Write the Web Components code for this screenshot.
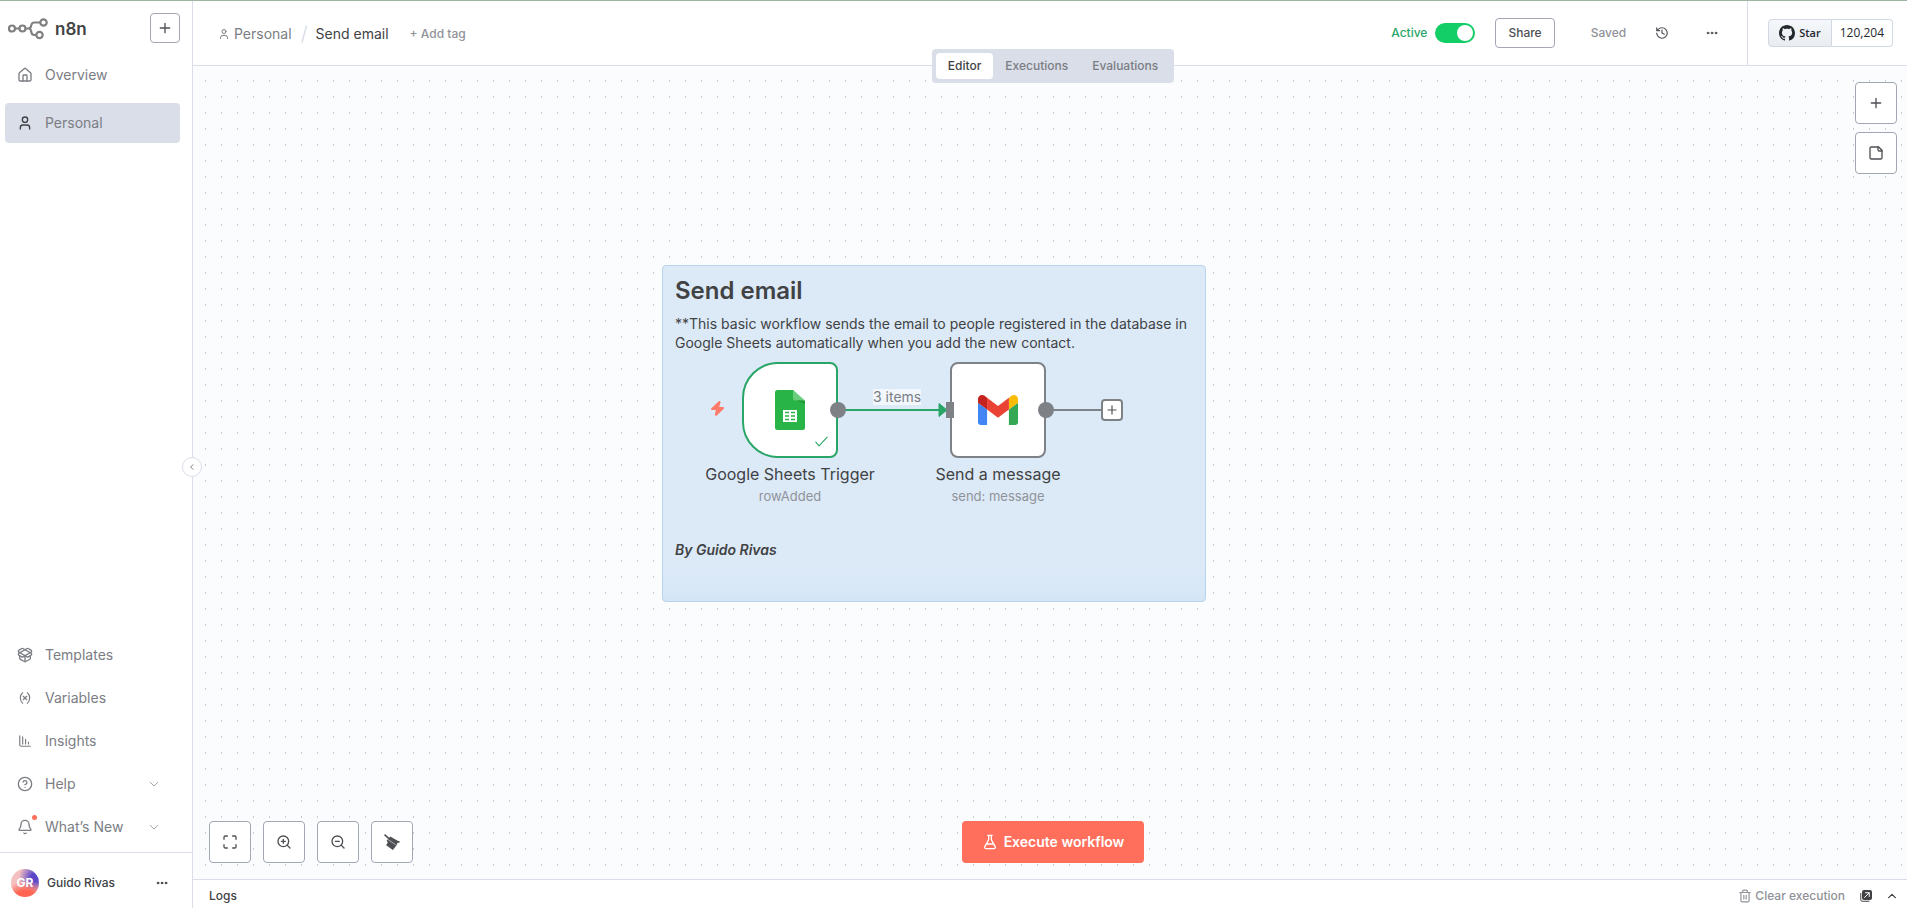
<!DOCTYPE html>
<html lang="en">
<head>
<meta charset="utf-8">
<meta name="viewport" content="width=device-width, initial-scale=1">
<title>Send email - n8n</title>
<style>
  :root {
    --line: #d9dee8;
    --control-line: #a3a6b5;
    --text-dark: #414244;
    --text: #7b7d84;
    --text-light: #909298;
    --green: #29a568;
    --coral: #ff6f5c;
    --shade: #d9dee8;
    --grey: #7e8186;
  }
  html, body { height: 100%; margin: 0; }
  body {
    font: 400 14px/20px Inter, "Liberation Sans", sans-serif;
    color: var(--text);
    background: #fff;
  }
</style>
</head>
<body>
<app-shell></app-shell>

<script>
const define = (name, html, init) => {
  const tpl = document.createElement('template');
  tpl.innerHTML = `<style>
    *, *::before, *::after { box-sizing: border-box; }
    [hidden] { display: none; }
    a { color: inherit; text-decoration: none; }
    button { font: inherit; color: inherit; background: none; border: 0; padding: 0; margin: 0; cursor: pointer; }
  </style>` + html;
  customElements.define(name, class extends HTMLElement {
    constructor() {
      super();
      this.attachShadow({ mode: 'open' }).append(tpl.content.cloneNode(true));
    }
    connectedCallback() { if (init) init(this, this.shadowRoot); }
  });
};

/* Icons on a 24-unit grid, drawn as strokes in the current colour */
const ICONS = {
  plus: '<path d="M5 12h14M12 5v14"/>',
  home: '<path d="M15 21v-8a1 1 0 0 0-1-1h-4a1 1 0 0 0-1 1v8"/><path d="M3 10a2 2 0 0 1 .709-1.528l7-5.999a2 2 0 0 1 2.582 0l7 5.999A2 2 0 0 1 21 10v9a2 2 0 0 1-2 2H5a2 2 0 0 1-2-2z"/>',
  user: '<path d="M19 21v-2a4 4 0 0 0-4-4H9a4 4 0 0 0-4 4v2"/><circle cx="12" cy="7" r="4"/>',
  box: '<path d="M12 22v-9"/><path d="M15.17 2.21a1.67 1.67 0 0 1 1.63 0L21 4.57a1.93 1.93 0 0 1 0 3.36L8.82 14.79a1.655 1.655 0 0 1-1.64 0L3 12.43a1.93 1.93 0 0 1 0-3.36z"/><path d="M20 13v3.87a2.06 2.06 0 0 1-1.11 1.83l-6 3.08a1.93 1.93 0 0 1-1.78 0l-6-3.08A2.06 2.06 0 0 1 4 16.87V13"/><path d="M21 12.43a1.93 1.93 0 0 0 0-3.36L8.83 2.2a1.64 1.64 0 0 0-1.63 0L3 4.57a1.93 1.93 0 0 0 0 3.36l12.18 6.86a1.636 1.636 0 0 0 1.63 0z"/>',
  variable: '<path d="M8 21s-4-3-4-9 4-9 4-9M16 3s4 3 4 9-4 9-4 9M15 9l-6 6M9 9l6 6"/>',
  chart: '<path d="M3 3v16a2 2 0 0 0 2 2h16M8 17V5M13 17V9M18 17v-3"/>',
  help: '<circle cx="12" cy="12" r="10"/><path d="M9.09 9a3 3 0 0 1 5.83 1c0 2-3 3-3 3M12 17h.01"/>',
  bell: '<path d="M10.268 21a2 2 0 0 0 3.464 0M3.262 15.326A1 1 0 0 0 4 17h16a1 1 0 0 0 .74-1.673C19.41 13.956 18 12.499 18 8A6 6 0 0 0 6 8c0 4.499-1.411 5.956-2.738 7.326"/>',
  down: '<path d="M3 8l9 9 9-9"/>',
  up: '<path d="M4 16l8-8 8 8"/>',
  left: '<path d="M15 5l-7 7 7 7"/>',
  dots: '<g fill="currentColor" stroke-width="1.6"><circle cx="4" cy="12" r="1.8"/><circle cx="12" cy="12" r="1.8"/><circle cx="20" cy="12" r="1.8"/></g>',
  history: '<path d="M3 12a9 9 0 1 0 9-9 9.75 9.75 0 0 0-6.74 2.74L3 8M3 3v5h5M12 7v5l4 2"/>',
  note: '<path d="M16 3H5a2 2 0 0 0-2 2v14a2 2 0 0 0 2 2h14a2 2 0 0 0 2-2V8Z"/><path d="M15 3v4a2 2 0 0 0 2 2h4"/>',
  fit: '<path d="M8 3H5a2 2 0 0 0-2 2v3M21 8V5a2 2 0 0 0-2-2h-3M3 16v3a2 2 0 0 0 2 2h3M16 21h3a2 2 0 0 0 2-2v-3"/>',
  zoomin: '<circle cx="11" cy="11" r="8"/><path d="M21 21l-4.35-4.35M11 8v6M8 11h6"/>',
  zoomout: '<circle cx="11" cy="11" r="8"/><path d="M21 21l-4.35-4.35M8 11h6"/>',
  broom: '<g fill="currentColor" stroke="none"><path d="M1.600 0L7.800 5.700 9.400 3.600 20.500 10.200 24 11.200 23 13.200 20.500 13.300 18.300 17.500 13.300 24 3.200 16.800 5.600 12.800 4 9.600 6.200 7.400 0 1.700z"/></g><path d="M6.500 8.600L17 15.800" stroke="#fff" stroke-width=".8"/>',
  flask: '<path d="M14 2v6a2 2 0 0 0 .245.96l5.51 10.08A2 2 0 0 1 18 22H6a2 2 0 0 1-1.755-2.96l5.51-10.08A2 2 0 0 0 10 8V2M6.453 15h11.094M8.500 2h7"/>',
  trash: '<path d="M3 6h18M19 6v14a2 2 0 0 1-2 2H7a2 2 0 0 1-2-2V6M8 6V4a2 2 0 0 1 2-2h4a2 2 0 0 1 2 2v2M10 11v6M14 11v6"/>',
  popout: '<path d="M1.500 7v12.500a3 3 0 0 0 3 3H18" stroke-width="2"/><rect x="4" y="0" width="20" height="20" rx="4" fill="currentColor" stroke="none"/><path d="M9 15l9-9M11 5.500h7.500V13" stroke="#fff" stroke-width="2"/>',
  bolt: '<path fill="currentColor" stroke="none" d="M14.500 0L1.500 12.500Q1 14.500 3 14.500H9.500L7.800 21.500Q8 24.500 10.500 23.500L22.500 12Q23 9.500 21 9.500H14.700L17 2Q16.500-.5 14.500 0z"/>',
  check: '<path d="M1.500 13l6 7L22.500 4"/>'
};

define('app-icon', `
  <style>
    :host { display: inline-flex; flex: none; width: var(--icon-size, 16px); height: var(--icon-size, 16px); }
    svg { width: 100%; height: 100%; overflow: visible; fill: none; stroke: currentColor;
          stroke-width: var(--icon-stroke, 2); stroke-linecap: round; stroke-linejoin: round; }
  </style>
  <svg viewBox="0 0 24 24" aria-hidden="true"></svg>`,
  (host, root) => { root.querySelector('svg').innerHTML = ICONS[host.getAttribute('name')] || ''; });

define('square-button', `
  <style>
    :host { display: inline-flex; flex: none; width: var(--button-size, 42px); height: var(--button-size, 42px); color: #4f5054; }
    button { flex: 1; display: grid; place-items: center; background: #fff; border: 1px solid var(--control-line); border-radius: 4px; }
  </style>
  <button type="button"><slot></slot></button>`,
  (host, root) => root.querySelector('button').setAttribute('aria-label', host.getAttribute('label') || ''));

define('nav-item', `
  <style>
    :host { display: block; }
    a { display: flex; align-items: center; gap: 12px; height: 40px; padding: 0 21px 0 12px; border-radius: 4px; }
    .icon { position: relative; display: flex; }
    .label { flex: 1; }
    .chevron { --icon-size: 10px; --icon-stroke: 2; color: var(--text-light); }
    .dot { position: absolute; top: -4px; right: -4px; width: 5px; height: 5px; border-radius: 50%; background: var(--coral); }
    :host([active]) a { background: var(--shade); }
    :host([active]) .icon { color: #3f4043; }
  </style>
  <a href="#"><span class="icon"><slot name="icon"></slot><i class="dot" hidden></i></span><span class="label"><slot></slot></span><app-icon class="chevron" name="down" hidden></app-icon></a>`,
  (host, root) => {
    root.querySelector('.chevron').hidden = !host.hasAttribute('expandable');
    root.querySelector('.dot').hidden = !host.hasAttribute('unread');
    if (host.hasAttribute('active')) root.querySelector('a').setAttribute('aria-current', 'page');
  });

define('app-sidebar', `
  <style>
    :host { position: relative; z-index: 2; display: flex; flex-direction: column; width: 193px; background: #fff; border-right: 1px solid var(--line); }
    .brand { display: flex; align-items: center; justify-content: space-between; padding: 12px 12px 12px 8px; }
    .logo { display: flex; align-items: center; gap: 7px; padding-top: 2px; font-size: 17px; font-weight: 600; color: #414244; }
    .logo svg { width: 40px; height: 22px; }
    nav { display: flex; flex-direction: column; }
    .top { gap: 8px; padding: 0 12px 0 5px; flex: 1; }
    .bottom { gap: 3px; padding: 0 12px 5px 5px; }
    .account { display: flex; align-items: center; gap: 8px; height: 56px; padding: 4px 24px 0 11px; border-top: 1px solid var(--line); font-size: 12px; font-weight: 500; color: var(--text-dark); }
    .avatar { display: grid; place-items: center; width: 28px; height: 28px; border-radius: 50%; color: #fff; font-weight: 700; flex: none;
      background: radial-gradient(circle at 50% 125%, #ff6552 35%, #ff655200 62%), radial-gradient(circle at 85% 30%, #5c47c8 12%, #5c47c800 52%), #f4c0c0; }
    .name { flex: 1; }
    .more, .collapse { display: grid; place-items: center; }
    .more { --icon-size: 12px; }
    .collapse { position: absolute; top: 50%; right: -10px; width: 20px; height: 20px; margin-top: 2px; border: 1px solid var(--line); border-radius: 50%; background: #fff; --icon-size: 8px; --icon-stroke: 3; }
  </style>
  <div class="brand">
    <div class="logo">
      <svg viewBox="0 0 40 22" fill="none" stroke="#7f7f80" stroke-width="2.200" aria-hidden="true"><circle cx="4" cy="10.500" r="3"/><circle cx="14.500" cy="10.500" r="3"/><circle cx="35.500" cy="4.500" r="3.200"/><circle cx="31.500" cy="17" r="3.200"/><path d="M7 10.500h4.500M17.500 10.500h3q2 0 2.400-2l.5-1.700q.6-2.300 3-2.300h6M20.500 10.500q2 0 2.400 2l.5 2q.6 2.500 3 2.500h2"/></svg>
      <span>n8n</span>
    </div>
    <square-button label="Create" style="--button-size:30px"><app-icon name="plus"></app-icon></square-button>
  </div>
  <nav class="top" aria-label="Projects">
    <nav-item><app-icon slot="icon" name="home"></app-icon>Overview</nav-item>
    <nav-item active><app-icon slot="icon" name="user"></app-icon>Personal</nav-item>
  </nav>
  <nav class="bottom" aria-label="More">
    <nav-item><app-icon slot="icon" name="box"></app-icon>Templates</nav-item>
    <nav-item><app-icon slot="icon" name="variable" style="--icon-size:14px;margin:1px"></app-icon>Variables</nav-item>
    <nav-item><app-icon slot="icon" name="chart" style="--icon-size:14px;margin:1px"></app-icon>Insights</nav-item>
    <nav-item expandable><app-icon slot="icon" name="help"></app-icon>Help</nav-item>
    <nav-item expandable unread><app-icon slot="icon" name="bell"></app-icon>What’s New</nav-item>
  </nav>
  <div class="account">
    <span class="avatar">GR</span><span class="name">Guido Rivas</span>
    <button class="more" type="button" aria-label="Account menu"><app-icon name="dots"></app-icon></button>
  </div>
  <button class="collapse" type="button" aria-label="Collapse sidebar"><app-icon name="left"></app-icon></button>`);

define('active-toggle', `
  <style>
    :host { display: block; }
    label { display: flex; align-items: center; gap: 8px; font-size: 12px; font-weight: 500; color: var(--green); }
    input { appearance: none; position: relative; width: 40px; height: 20px; margin: 0; border-radius: 10px; background: #b3b6c4; }
    input:checked { background: #13ce66; }
    input::after { content: ""; position: absolute; top: 2px; left: 2px; width: 16px; height: 16px; border-radius: 50%; background: #fff; }
    input:checked::after { left: 22px; }
  </style>
  <label>Active<input type="checkbox" role="switch" checked></label>`);

define('github-star', `
  <style>
    :host { display: flex; height: 28px; font: 600 11px/26px "Open Sans", "Noto Sans", sans-serif; color: #24292f; }
    a { display: flex; align-items: center; border: 1px solid #d0d9e2; }
    .star { gap: 4px; padding: 0 10px; background: linear-gradient(#f6f8fa, #e9edf1); border-radius: 4px 0 0 4px; }
    .count { padding: 0 8px; font-size: 12px; font-weight: 400; border-left: 0; border-radius: 0 4px 4px 0; }
    svg { width: 16px; height: 16px; }
  </style>
  <a class="star" href="#"><svg viewBox="0 0 16 16" fill="#24292f" aria-hidden="true"><path d="M8 0C3.580 0 0 3.580 0 8c0 3.540 2.290 6.530 5.470 7.590.4.070.55-.17.55-.38 0-.19-.01-.82-.01-1.490-2.010.37-2.530-.49-2.690-.94-.09-.23-.48-.94-.82-1.130-.28-.15-.68-.52-.01-.53.63-.01 1.080.58 1.230.82.72 1.210 1.870.87 2.330.66.070-.52.28-.87.51-1.070-1.780-.2-3.640-.89-3.640-3.950 0-.87.31-1.590.82-2.150-.08-.2-.36-1.020.08-2.120 0 0 .67-.21 2.200.82.64-.18 1.320-.27 2-.27s1.360.09 2 .27c1.530-1.040 2.200-.82 2.200-.82.44 1.100.16 1.920.08 2.120.51.56.82 1.270.82 2.150 0 3.070-1.870 3.750-3.650 3.950.29.25.54.73.54 1.480 0 1.070-.01 1.930-.01 2.200 0 .21.15.46.55.38A8.010 8.010 0 0 0 16 8c0-4.420-3.580-8-8-8z"/></svg>Star</a><a class="count" href="#">120,204</a>`);

define('view-tabs', `
  <style>
    :host { display: flex; padding: 4px; border-radius: 4px; background: var(--shade); font-size: 12px; font-weight: 500; }
    button { height: 26px; padding: 0 12px; border-radius: 4px; }
    [aria-selected=true] { background: #fff; color: var(--text-dark); }
  </style>
  <button type="button" role="tab" aria-selected="true">Editor</button><button type="button" role="tab" aria-selected="false">Executions</button><button type="button" role="tab" aria-selected="false">Evaluations</button>`,
  host => host.setAttribute('role', 'tablist'));

define('app-header', `
  <style>
    :host { position: relative; z-index: 1; display: flex; height: 65px; background: #fff; border-bottom: 1px solid var(--line); }
    .main { flex: 1; display: flex; align-items: center; justify-content: space-between; padding: 0 29px 0 25px; }
    .crumbs, .actions, .crumbs a { display: flex; align-items: center; }
    .crumbs { padding-top: 2px; }
    .crumbs a { gap: 4px; --icon-size: 12px; }
    .crumbs h1 { margin: 0; font: inherit; color: var(--text-dark); }
    .slash { width: 24px; height: 18px; }
    .tag { margin-left: 21px; font-size: 12px; font-weight: 500; color: var(--text-light); }
    .share { height: 30px; margin-left: 20px; padding: 0 12px; border: 1px solid var(--control-line); border-radius: 4px; color: #4f5054; }
    .actions { font-size: 12px; font-weight: 500; }
    .saved { margin: 0 29px 0 36px; color: var(--text-light); }
    .icon { display: grid; place-items: center; color: #4f5054; --icon-size: 14px; }
    .icon + .icon { margin-left: 37px; --icon-size: 12px; }
    .github { display: flex; align-items: center; padding: 0 14px 0 20px; border-left: 1px solid var(--line); }
    .github github-star { margin-bottom: 1px; }
    .tabs { position: absolute; top: 48px; left: 16px; right: 10px; display: flex; justify-content: center; pointer-events: none; }
    .tabs view-tabs { pointer-events: auto; }
  </style>
  <div class="main">
    <div class="crumbs">
      <a href="#"><app-icon name="user"></app-icon>Personal</a>
      <svg class="slash" viewBox="0 0 24 18" aria-hidden="true"><path d="M10 17.500L14.500 .5" stroke="#d9dee8" stroke-width="1.500"/></svg>
      <h1>Send email</h1>
      <button class="tag" type="button">+ Add tag</button>
    </div>
    <div class="actions">
      <active-toggle></active-toggle>
      <button class="share" type="button">Share</button>
      <span class="saved">Saved</span>
      <button class="icon" type="button" aria-label="Version history"><app-icon name="history"></app-icon></button>
      <button class="icon" type="button" aria-label="Workflow menu"><app-icon name="dots"></app-icon></button>
    </div>
  </div>
  <div class="github"><github-star></github-star></div>
  <div class="tabs"><view-tabs></view-tabs></div>`);

define('sticky-note', `
  <style>
    :host { display: block; padding: 13px 12px; border: 1px solid #b7d3ee; border-radius: 4px; color: var(--text-dark);
      background: linear-gradient(#dceaf8 calc(100% - 32px), #d4e6f6); }
    ::slotted(h2) { margin: 0 0 11px; font-size: 24px; line-height: 24px; font-weight: 600; }
    ::slotted(p) { margin: 0; line-height: 19px; }
    ::slotted(.author) { margin-top: 188px; font-weight: 600; font-style: italic; }
  </style>
  <slot></slot>`);

define('flow-node', `
  <style>
    :host { display: block; width: 96px; color: var(--grey); }
    .box { position: relative; display: grid; place-items: center; height: 96px; border: 2px solid currentColor; border-radius: 8px; background: #fff; }
    :host([trigger]) .box { border-radius: 36px 8px 8px 36px; color: var(--green); }
    .port { position: absolute; background: var(--grey); }
    .out { width: 16px; height: 16px; right: -10px; top: 38px; border-radius: 50%; }
    .in { width: 8px; height: 16px; left: -6px; top: 38px; }
    .status { position: absolute; right: 8px; bottom: 8px; --icon-size: 13px; --icon-stroke: 2; }
    .bolt { position: absolute; left: -34px; top: 37px; color: #ff7b69; --icon-size: 15px; }
    .text { display: flex; flex-direction: column; align-items: center; margin-top: 4px; white-space: nowrap; }
    .title { font-size: 16px; line-height: 24px; color: var(--text-dark); }
    .sub { font-size: 13px; line-height: 20px; color: var(--text-light); }
  </style>
  <div class="box">
    <slot name="icon"></slot>
    <i class="port in"></i><i class="port out"></i>
    <app-icon class="status" name="check"></app-icon><app-icon class="bolt" name="bolt"></app-icon>
  </div>
  <div class="text"><span class="title"><slot></slot></span><span class="sub"><slot name="sub"></slot></span></div>`,
  (host, root) => {
    const trigger = host.hasAttribute('trigger');
    root.querySelector(trigger ? '.in' : '.status').remove();
    if (!trigger) root.querySelector('.bolt').remove();
  });

define('workflow-canvas', `
  <style>
    :host { position: relative; display: flex; flex-direction: column; justify-content: space-between; min-height: 0; overflow: hidden; padding: 16px 10px 16px 16px;
      background-image:
        linear-gradient(to right, #fbfcfe 12px, transparent 12px, transparent 13px, #fbfcfe 13px),
        linear-gradient(to bottom, #fbfcfe 14px, #c9cbd0 14px);
      background-size: 16px 16px; }
    .tools { position: relative; display: flex; flex-direction: column; align-items: flex-end; gap: 8px; }
    .dock { position: relative; display: grid; grid-template-columns: 1fr auto 1fr; align-items: center; }
    .zoom { display: flex; gap: 12px; }
    .run { display: flex; align-items: center; gap: 6px; height: 42px; padding: 0 20px; border-radius: 4px; background: var(--coral); color: #fff; font-weight: 600; }
    /* Items placed on the free canvas */
    .item { position: absolute; }
    sticky-note { left: 469px; top: 199px; width: 544px; height: 337px; }
    .sheets { left: 549px; top: 296px; }
    .gmail { left: 757px; top: 296px; }
    .wires { left: 645px; top: 328px; width: 264px; height: 32px; }
    .count { left: 680px; top: 323px; line-height: 16px; background: #ffffff99; }
    .add { left: 908px; top: 333px; width: 22px; height: 22px; display: grid; place-items: center; border: 2px solid var(--grey); border-radius: 4px; background: #fff; color: #4f5054; --icon-size: 14px; --icon-stroke: 2; }
  </style>
  <sticky-note class="item">
    <h2>Send email</h2>
    <p>**This basic workflow sends the email to people registered in the database in Google Sheets automatically when you add the new contact.</p>
    <p class="author">By Guido Rivas</p>
  </sticky-note>
  <svg class="item wires" viewBox="0 0 264 32" aria-hidden="true">
    <path d="M0 16H104" stroke="#29a568" stroke-width="2"/><path d="M101 9.500L109 16L101 22.500z" fill="#29a568" stroke="#29a568" stroke-linejoin="round"/>
    <path d="M208 16H264" stroke="#7e8186" stroke-width="2"/>
  </svg>
  <flow-node class="item sheets" trigger>
    <svg slot="icon" width="30" height="40" viewBox="0 0 30 40" aria-hidden="true"><path d="M2.500 0H18L30 12V37.500Q30 40 27.500 40H2.500Q0 40 0 37.500V2.500Q0 0 2.500 0z" fill="#28b446"/><path d="M18 0L30 10.500H20.500Q18 10.500 18 8z" fill="#6ace7c"/><path d="M21 10.500H30V14z" fill="#219b38"/><path d="M8 20H22V32H8z" fill="#fff"/><path d="M10 22.500h4M16 22.500h4M10 26h4M16 26h4M10 29.500h4M16 29.500h4" stroke="#28b446" stroke-width="1.300"/></svg>
    Google Sheets Trigger<span slot="sub">rowAdded</span>
  </flow-node>
  <flow-node class="item gmail">
    <svg slot="icon" width="40" height="30" viewBox="52 42 88 66" aria-hidden="true"><path fill="#4285f4" d="M58 108h14V74L52 59v43c0 3.320 2.690 6 6 6"/><path fill="#34a853" d="M120 108h14c3.320 0 6-2.690 6-6V59l-20 15"/><path fill="#fbbc04" d="M120 48v26l20-15v-8c0-7.420-8.470-11.650-14.400-7.200"/><path fill="#ea4335" d="M72 74V48l24 18 24-18v26L96 92"/><path fill="#c5221f" d="M52 51v8l20 15V48l-5.600-4.200c-5.940-4.450-14.400-.22-14.400 7.200"/></svg>
    Send a message<span slot="sub">send: message</span>
  </flow-node>
  <span class="item count">3 items</span>
  <button class="item add" type="button" aria-label="Add next node"><app-icon name="plus"></app-icon></button>

  <div class="tools">
    <square-button label="Add node"><app-icon name="plus"></app-icon></square-button>
    <square-button label="Add sticky note"><app-icon name="note"></app-icon></square-button>
  </div>
  <div class="dock">
    <div class="zoom">
      <square-button label="Zoom to fit"><app-icon name="fit"></app-icon></square-button>
      <square-button label="Zoom in"><app-icon name="zoomin"></app-icon></square-button>
      <square-button label="Zoom out"><app-icon name="zoomout"></app-icon></square-button>
      <square-button label="Tidy up"><app-icon name="broom"></app-icon></square-button>
    </div>
    <button class="run" type="button"><app-icon name="flask"></app-icon>Execute workflow</button>
  </div>`);

define('logs-bar', `
  <style>
    :host { display: flex; align-items: center; justify-content: space-between; height: 29px; padding: 4px 10px 0 16px; border-top: 1px solid var(--line); background: #fff; font-size: 12px; font-weight: 500; color: var(--text-dark); }
    div, button { display: flex; align-items: center; }
    div { gap: 15px; --icon-size: 12px; }
    .clear { gap: 3px; color: var(--text-light); --icon-size: 14px; }
  </style>
  <span>Logs</span>
  <div>
    <button class="clear" type="button"><app-icon name="trash"></app-icon>Clear execution</button>
    <button type="button" aria-label="Pop out logs"><app-icon name="popout"></app-icon></button>
    <button type="button" aria-label="Open logs"><app-icon name="up" style="--icon-size:10px;--icon-stroke:3"></app-icon></button>
  </div>`);

define('app-shell', `
  <style>
    :host { display: flex; height: 100%; border-top: 1px solid #9db59c; box-sizing: border-box; }
    main { flex: 1; min-width: 0; display: flex; flex-direction: column; }
    workflow-canvas { flex: 1; }
  </style>
  <app-sidebar></app-sidebar>
  <main><app-header></app-header><workflow-canvas></workflow-canvas><logs-bar></logs-bar></main>`);
</script>
</body>
</html>
